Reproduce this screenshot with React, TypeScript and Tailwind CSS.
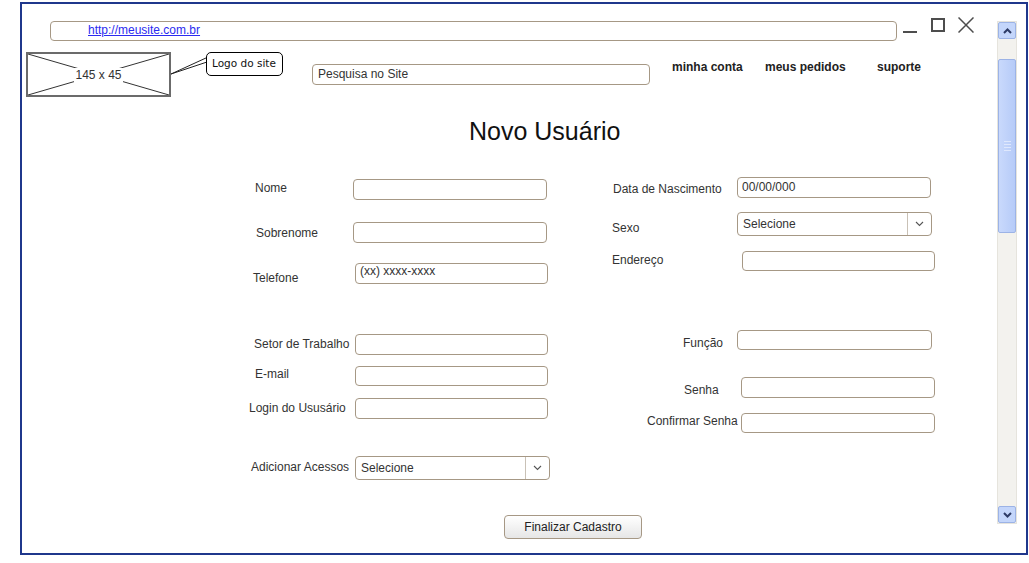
import React from "react";

const font = "font-['Liberation_Sans',Arial,sans-serif]";

function TextBox({ className, text }: { className: string; text?: string }) {
  return (
    <div
      className={`shrink-0 rounded-[4px] border border-[#a69885] bg-white pl-[4px] text-[12px] leading-[14px] text-[#333] ${className}`}
    >
      {text}
    </div>
  );
}

function SelectBox({ className }: { className: string }) {
  return (
    <div
      className={`flex shrink-0 items-stretch rounded-[4px] border border-[#a69885] bg-white text-[12px] text-[#333] ${className}`}
    >
      <span className="flex flex-1 items-center pl-[5px]">Selecione</span>
      <span className="flex w-[24px] items-center justify-center border-l border-[#c9c1b6]">
        <svg width="9" height="6" viewBox="0 0 9 6">
          <path d="M1 1 L4.5 4.5 L8 1" fill="none" stroke="#555" strokeWidth="1.1" />
        </svg>
      </span>
    </div>
  );
}

function Label({ className, children }: { className: string; children: React.ReactNode }) {
  return (
    <div className={`shrink-0 whitespace-nowrap text-[12px] leading-[14px] text-[#333] ${className}`}>
      {children}
    </div>
  );
}

function Chevron({ up }: { up?: boolean }) {
  return (
    <svg width="9" height="6" viewBox="0 0 9 6">
      <path
        d={up ? "M1 5 L4.5 1.5 L8 5" : "M1 1 L4.5 4.5 L8 1"}
        fill="none"
        stroke="#2d3b66"
        strokeWidth="2"
      />
    </svg>
  );
}

export default function App() {
  return (
    <div className={`h-[563px] w-[1029px] overflow-hidden bg-white pl-[20px] pt-[2px] ${font}`}>
      <div className="flex h-[553px] w-[1008px] border-2 border-[#1f378c]">
        {/* page content */}
        <div className="w-[975px] shrink-0">
          {/* address bar + window controls */}
          <div className="mt-[17px] flex items-start">
            <div className="ml-[28px] h-[20px] w-[847px] rounded-[4px] border border-[#a69885] pl-[37px] text-[12px] leading-[17px]">
              <a href="#" className="text-[#2b2bf0] underline">
                http://meusite.com.br
              </a>
            </div>
            <div className="ml-[6px] mt-[10px] h-[2px] w-[14px] bg-[#4d4d4d]" />
            <div className="ml-[14px] mt-[-3px] h-[14px] w-[14px] border-2 border-[#4d4d4d]" />
            <svg className="ml-[13px] mt-[-4px]" width="16" height="16" viewBox="0 0 16 16">
              <path d="M0.5 0.5 L15.5 15.5 M15.5 0.5 L0.5 15.5" stroke="#4d4d4d" strokeWidth="1.5" />
            </svg>
          </div>

          {/* header: logo, callout, search, nav */}
          <div className="mt-[11px] flex items-start">
            <div className="relative ml-[4px] flex h-[45px] w-[145px] items-center justify-center border-2 border-[#6b6b6b]">
              <svg className="absolute inset-0 h-full w-full" viewBox="0 0 141 41" preserveAspectRatio="none">
                <path d="M0 0 L141 41 M141 0 L0 41" stroke="#333" strokeWidth="1" />
              </svg>
              <span className="relative bg-white px-[1px] text-[12px] leading-[14px] text-[#333]">145 x 45</span>
            </div>
            <svg className="shrink-0" width="35" height="30" viewBox="0 0 35 30">
              <path d="M0 22 L36 5.5 M0 22 L36 10" stroke="#222" strokeWidth="1" fill="none" />
            </svg>
            <div className="flex h-[24px] w-[77px] shrink-0 items-center rounded-[5px] border border-black bg-white pl-[5px] font-['Comic_Sans_MS','DejaVu_Sans',sans-serif] text-[10.5px] text-[#111]">
              Logo do site
            </div>
            <div className="ml-[29px] mt-[12px] h-[21px] w-[338px] rounded-[4px] border border-[#a69885] pl-[5px] text-[12px] leading-[19px] text-[#333]">
              Pesquisa no Site
            </div>
            <nav className="ml-[22px] mt-[8px] flex text-[12px] font-bold leading-[14px] text-[#222]">
              <span className="w-[93px]">minha conta</span>
              <span className="w-[112px]">meus pedidos</span>
              <span>suporte</span>
            </nav>
          </div>

          {/* title */}
          <h1 className="ml-[447px] mt-[20px] text-[25px] font-normal leading-[29px] text-[#111]">Novo Usuário</h1>

          {/* form */}
          <div className="flex">
            <div className="ml-[218px] w-[320px] shrink-0">
              <div className="mt-[33px] flex">
                <Label className="mt-[2px] w-[113px] pl-[15px]">Nome</Label>
                <TextBox className="h-[21px] w-[194px]" />
              </div>
              <div className="mt-[22px] flex">
                <Label className="mt-[4px] w-[113px] pl-[16px]">Sobrenome</Label>
                <TextBox className="h-[21px] w-[194px]" />
              </div>
              <div className="mt-[20px] flex">
                <Label className="mt-[8px] w-[115px] pl-[13px]">Telefone</Label>
                <TextBox className="h-[21px] w-[193px]" text="(xx) xxxx-xxxx" />
              </div>
              <div className="mt-[49px] flex">
                <Label className="mt-[3px] w-[115px] pl-[14px]">Setor de Trabalho</Label>
                <TextBox className="h-[21px] w-[193px]" />
              </div>
              <div className="mt-[11px] flex">
                <Label className="mt-[1px] w-[115px] pl-[15px]">E-mail</Label>
                <TextBox className="h-[20px] w-[193px]" />
              </div>
              <div className="mt-[12px] flex">
                <Label className="mt-[3px] w-[115px] pl-[9px]">Login do Ususário</Label>
                <TextBox className="h-[21px] w-[193px]" />
              </div>
              <div className="mt-[37px] flex">
                <Label className="mt-[4px] w-[115px] pl-[11px]">Adicionar Acessos</Label>
                <SelectBox className="h-[24px] w-[195px]" />
              </div>
            </div>

            <div className="ml-[40px] w-[340px] shrink-0">
              <div className="mt-[31px] flex">
                <Label className="mt-[5px] w-[137px] pl-[13px]">Data de Nascimento</Label>
                <TextBox className="h-[21px] w-[194px] pt-[2px]" text="00/00/000" />
              </div>
              <div className="mt-[14px] flex">
                <Label className="mt-[9px] w-[137px] pl-[12px]">Sexo</Label>
                <SelectBox className="h-[24px] w-[195px]" />
              </div>
              <div className="mt-[15px] flex">
                <Label className="mt-[2px] w-[142px] pl-[12px]">Endereço</Label>
                <TextBox className="h-[20px] w-[193px]" />
              </div>
              <div className="mt-[59px] flex">
                <Label className="mt-[6px] w-[137px] pl-[83px]">Função</Label>
                <TextBox className="h-[20px] w-[195px]" />
              </div>
              <div className="mt-[27px] flex">
                <Label className="mt-[6px] w-[141px] pl-[84px]">Senha</Label>
                <TextBox className="h-[21px] w-[194px]" />
              </div>
              <div className="mt-[15px] flex">
                <Label className="mt-[1px] w-[141px] pl-[47px]">Confirmar Senha</Label>
                <TextBox className="h-[20px] w-[194px]" />
              </div>
            </div>
          </div>

          {/* submit */}
          <button className="ml-[482px] mt-[35px] h-[24px] w-[138px] rounded-[4px] border border-[#a69885] bg-gradient-to-b from-white to-[#e6e6e6] text-[12px] text-[#222]">
            Finalizar Cadastro
          </button>
        </div>

        {/* scrollbar */}
        <div className="mt-[17px] flex h-[503px] w-[20px] shrink-0 flex-col border border-[#e6e4dd] bg-[#f3f2ee]">
          <div className="flex h-[17px] items-center justify-center rounded-[2px] border border-[#9cb3e6] bg-[#c4d6fb]">
            <Chevron up />
          </div>
          <div className="mt-[20px] flex h-[174px] flex-col items-center justify-center gap-[2px] rounded-[2px] border border-[#9cb3e6] bg-gradient-to-r from-[#c9d9fc] to-[#b6cbf8]">
            <span className="h-px w-[7px] bg-[#dfe8fd]" />
            <span className="h-px w-[7px] bg-[#dfe8fd]" />
            <span className="h-px w-[7px] bg-[#dfe8fd]" />
            <span className="h-px w-[7px] bg-[#dfe8fd]" />
          </div>
          <div className="mt-auto flex h-[17px] items-center justify-center rounded-[2px] border border-[#9cb3e6] bg-[#c4d6fb]">
            <Chevron />
          </div>
        </div>
      </div>
    </div>
  );
}
